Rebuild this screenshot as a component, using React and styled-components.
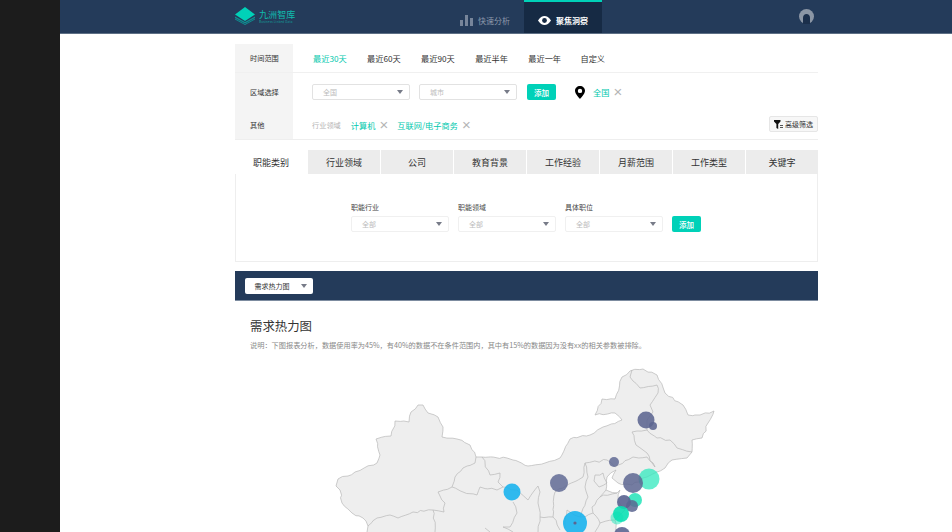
import React from 'react';
import styled, { createGlobalStyle } from 'styled-components';

const GlobalStyle = createGlobalStyle`
  html, body {
    margin: 0;
    height: 532px;
    overflow: hidden;
    background: #fff;
  }
  body, button {
    font-family: "Noto Sans CJK SC", "Liberation Sans", sans-serif;
  }
`;

const Page = styled.div`
  display: flex;
  width: 952px;
  height: 532px;
  overflow: hidden;
`;

const SideBar = styled.div`
  flex: 0 0 60px;
  background: #1c1c1c;
`;

const Main = styled.div`
  flex: 1;
  min-width: 0;
`;

const Header = styled.header`
  height: 33px;
  background: #243b5a;
  border-bottom: 1px solid #5d6f85;
  padding-left: 175px;
`;

const HeaderInner = styled.div`
  width: 583px;
  height: 33px;
  display: flex;
  align-items: center;
`;

const Logo = styled.div`
  display: flex;
  align-items: center;
  gap: 4px;
  width: 211px;
  margin-top: -1px;
`;

const LogoText = styled.div`
  color: #10bcae;
  font-size: 9px;
  line-height: 11px;
  letter-spacing: 0.1px;

  small {
    display: block;
    margin-top: 1px;
    font-size: 3px;
    line-height: 3px;
    letter-spacing: 0.2px;
    white-space: nowrap;
    opacity: 0.75;
  }
`;

const NavTab = styled.div`
  box-sizing: border-box;
  height: 33px;
  width: ${props => props.$width}px;
  display: flex;
  align-items: center;
  justify-content: center;
  gap: 5px;
  padding-top: 6px;
  font-size: 8px;
  color: ${props => (props.$active ? '#fff' : '#8d9aab')};
  background: ${props => (props.$active ? '#162a44' : 'transparent')};
  border-top: 2px solid ${props => (props.$active ? '#00d1b8' : 'transparent')};
  font-weight: ${props => (props.$active ? 700 : 400)};
`;

const Avatar = styled.svg`
  margin-left: 197px;
  margin-top: -1px;
`;

const Content = styled.div`
  width: 583px;
  margin-left: 175px;
  padding-top: 10px;
`;

const FilterPanel = styled.div`
  border-bottom: 1px solid #eee;
`;

const FilterRow = styled.div`
  display: flex;
  box-sizing: border-box;
  height: ${props => props.$height}px;
  border-bottom: ${props => (props.$line ? '1px solid #f0f0f0' : 'none')};
`;

const RowLabel = styled.div`
  flex: 0 0 58px;
  background: #f4f4f4;
  display: flex;
  align-items: center;
  padding-left: 15px;
  box-sizing: border-box;
  font-size: 7.2px;
  color: #333;
`;

const RowBody = styled.div`
  flex: 1;
  display: flex;
  align-items: center;
  padding-left: 19px;
`;

const TimeLink = styled.span`
  font-size: 8.2px;
  margin-right: 20.4px;
  color: ${props => (props.$active ? '#00c9ae' : '#333')};

  &:first-child {
    margin-left: 1px;
  }

  &:last-child {
    margin-left: -1px;
  }
`;

const SelectBox = styled.div`
  box-sizing: border-box;
  width: 98px;
  height: 16px;
  border: 1px solid ${props => (props.$soft ? '#f0f0f0' : '#e2e2e2')};
  border-radius: 2px;
  background: #fff;
  display: flex;
  align-items: center;
  justify-content: space-between;
  padding: 0 6px 0 10px;
  font-size: 7px;
  color: #bbb;
  flex: none;
`;

const Caret = styled.i`
  width: 0;
  height: 0;
  border-left: 3px solid transparent;
  border-right: 3px solid transparent;
  border-top: 4px solid #777b88;
`;

const AddButton = styled.button`
  width: 29px;
  height: 16px;
  padding: 0;
  border: 0;
  border-radius: 2px;
  background: #00d1b8;
  color: #fff;
  font-size: 7.5px;
  font-weight: 500;
  flex: none;
`;

const SelectGap = styled.div`
  flex: 0 0 ${props => props.$size}px;
`;

const Region = styled.div`
  display: flex;
  align-items: center;
  gap: 8px;
  margin-left: 19px;
`;

const TagText = styled.span`
  color: #00c9ae;
  font-size: 8.2px;
  white-space: nowrap;
`;

const Close = styled.span`
  flex: 0 0 9px;
  display: flex;
  align-items: center;
  justify-content: center;
  height: 10px;
  margin: 0 ${props => props.$right ?? 9}px 0 ${props => props.$left ?? 4}px;
  color: #b5b5b5;
  font-size: 15px;
  line-height: 10px;
  font-family: "Liberation Sans", sans-serif;
`;

const FieldName = styled.span`
  color: #b4b4b4;
  font-size: 7.2px;
  margin-right: 10px;
  white-space: nowrap;
`;

const AdvancedButton = styled.button`
  margin-left: auto;
  margin-top: -2px;
  width: 49px;
  height: 16px;
  padding: 0;
  background: #f7f7f7;
  border: 1px solid #e6e6e6;
  border-radius: 2px;
  display: flex;
  align-items: center;
  justify-content: center;
  gap: 2px;
  font-size: 7px;
  color: #333;
`;

const TabPanel = styled.div`
  margin-top: 10px;
  height: 112px;
  border: 1px solid #eee;
  border-top: 0;
  box-sizing: border-box;
`;

const TabRow = styled.div`
  display: flex;
  height: 24px;
  margin: 0 -1px;
  gap: 1px;
`;

const Tab = styled.div`
  flex: 1;
  display: flex;
  align-items: center;
  justify-content: center;
  font-size: 9px;
  color: #333;
  background: ${props => (props.$active ? '#fff' : '#ececec')};
`;

const SelectorRow = styled.div`
  display: flex;
  align-items: flex-end;
  gap: 9px;
  margin-top: 28px;
  padding-left: 115px;
`;

const Field = styled.div`
  display: flex;
  flex-direction: column;
  gap: 4px;
`;

const FieldLabel = styled.label`
  font-size: 7px;
  line-height: 10px;
  color: #444;
`;

const ChartBar = styled.div`
  margin-top: 9px;
  height: 30px;
  box-sizing: border-box;
  padding-left: 10px;
  background: #243b5a;
  border-bottom: 1px solid #7d8ca0;
  display: flex;
  align-items: center;
`;

const ChartSelect = styled.div`
  box-sizing: border-box;
  width: 68px;
  height: 16px;
  margin-top: 1px;
  border-radius: 2px;
  background: #fff;
  display: flex;
  align-items: center;
  justify-content: space-between;
  padding: 0 6px 0 9.500px;
  font-size: 7px;
  color: #333;
`;

const ChartSection = styled.section`
  padding: 17px 0 0;
`;

const ChartTitle = styled.h2`
  margin: 0 0 0 15px;
  font-size: 12.4px;
  line-height: 16px;
  font-weight: 400;
  color: #333;
`;

const ChartNote = styled.p`
  margin: 6px 0 0 15px;
  font-size: 7.2px;
  line-height: 10px;
  color: #888;
  white-space: nowrap;
`;

const MapSvg = styled.svg`
  display: block;
  margin-top: 10px;
`;

const OUTLINE =
  'M336 486 338 479 348 476 355 472 377 463 380 455 376 439 391 436 395 421 409 422 411 412 418 405 423 405 428 413 438 417 443 427 442 437 457 439 470 445 476 457 482 457 507 458 513 460 528 466 545 463 560 458 570 439 590 435 603 427 622 420 615 413 595 415 602 399 615 399 622 377 630 371 643 369 657 375 665 393 683 405 688 415 700 415 714 411 708 423 702 438 692 440 692 452 687 458 672 460 665 468 657 472 647 477 632 485 618 483 612 478 616 470 607 477 606 490 617 493 620 490 618 500 625 510 615 520 617 533 626 560 360 560 367 532 368 526 363 518 352 513 342 503 340 490Z';

const BORDERS = [
  'M368 526 377 518 390 515 398 518 413 512 433 510 444 512 445 503 438 492 452 487 463 492 477 495 480 487 497 490 503 487',
  'M433 510 435 532',
  'M452 487 455 477 463 468 475 463 476 457',
  'M482 457 490 475 500 473 498 482 503 487 517 490 528 500 538 486 540 492 538 503 540 517 553 517 555 492 567 485 583 477 585 463 607 460 615 467 633 457 647 457 655 467',
  'M513 502 517 513 510 527 503 527 513 532',
  'M485 528 490 532',
  'M632 370 630 377 640 388 657 385 658 393 650 405 653 412 647 420 647 430 657 438 670 440 677 448 692 452',
  'M632 432 637 431 647 430',
  'M632 432 636 445 643 450 647 453 655 467',
  'M585 463 588 477 585 487 588 497 580 517 593 513 600 523 595 532',
  'M617 493 600 497 592 507 593 513',
  'M595 475 603 473 607 483 599 487 594 481Z',
  'M580 517 567 510 565 528',
  'M600 523 615 520',
  'M540 517 538 532',
  'M553 517 560 530',
  'M606 490 600 497',
];

const BUBBLES = [
  { x: 559, y: 483, r: 9, fill: 'rgba(92,101,145,0.82)' },
  { x: 512, y: 492, r: 8.5, fill: 'rgba(20,178,238,0.88)' },
  { x: 575, y: 523, r: 12, fill: 'rgba(20,178,238,0.88)' },
  { x: 575, y: 523, r: 1.6, fill: '#5c6591' },
  { x: 614, y: 462, r: 5, fill: 'rgba(92,101,145,0.82)' },
  { x: 646, y: 420, r: 8.5, fill: 'rgba(92,101,145,0.88)' },
  { x: 653, y: 426, r: 4, fill: 'rgba(92,101,145,0.88)' },
  { x: 649, y: 479, r: 10.5, fill: 'rgba(50,232,190,0.75)' },
  { x: 633, y: 483, r: 10, fill: 'rgba(92,101,145,0.85)' },
  { x: 635, y: 500, r: 7, fill: 'rgba(20,226,180,0.8)' },
  { x: 624, y: 502, r: 7, fill: 'rgba(92,101,145,0.92)' },
  { x: 632, y: 506, r: 6, fill: 'rgba(92,101,145,0.85)' },
  { x: 617, y: 518, r: 6.5, fill: 'rgba(50,232,190,0.55)' },
  { x: 621, y: 514, r: 8, fill: 'rgba(10,224,180,0.9)' },
  { x: 622, y: 535, r: 8, fill: 'rgba(92,101,145,0.9)' },
];

// the province lines wander in the reference, so break long segments up a little
const roughen = d => {
  let seed = d.length;
  const wobble = () => {
    seed = (seed * 9301 + 49297) % 233280;
    return (seed / 233280 - 0.5) * 2.2;
  };
  const nums = d.match(/-?\d+(\.\d+)?/g).map(Number);
  const out = [];
  for (let i = 0; i < nums.length; i += 2) {
    const [x, y] = [nums[i], nums[i + 1]];
    if (i > 0) {
      const [px, py] = [nums[i - 2], nums[i - 1]];
      const steps = Math.floor(Math.hypot(x - px, y - py) / 4);
      for (let s = 1; s < steps; s++) {
        out.push(`${(px + ((x - px) * s) / steps + wobble()).toFixed(1)} ${(py + ((y - py) * s) / steps + wobble()).toFixed(1)}`);
      }
    }
    out.push(`${x} ${y}`);
  }
  return `M${out.join(' ')}${d.endsWith('Z') ? 'Z' : ''}`;
};

const ChinaMap = () => (
  <MapSvg width="583" height="172" viewBox="235 360 583 172">
    <path d={roughen(OUTLINE)} fill="#eeeeee" stroke="#b8b8b8" strokeWidth="0.7" strokeLinejoin="round" />
    {BORDERS.map(d => (
      <path key={d} d={roughen(d)} fill="none" stroke="#b8b8b8" strokeWidth="0.7" strokeLinejoin="round" />
    ))}
    {BUBBLES.map(b => (
      <circle key={`${b.x}-${b.y}-${b.r}`} cx={b.x} cy={b.y} r={b.r} fill={b.fill} />
    ))}
  </MapSvg>
);

const LogoMark = () => (
  <svg width="20" height="18" viewBox="0 0 20 18">
    <path d="M0 9.5 10 15 20 9.5 20 11 10 16.500 0 11Z" fill="#0f8f92" />
    <path d="M0 11.500 10 17 20 11.500 20 12.500 10 18 0 12.500Z" fill="#0f8f92" />
    <path d="M10 0 20 7.500 10 14 0 7.500Z" fill="#00d1b8" />
  </svg>
);

const BarsIcon = () => (
  <svg width="13" height="11" viewBox="0 0 13 11">
    <rect x="0" y="5" width="3" height="6" fill="#77859a" />
    <rect x="5" y="0" width="3" height="11" fill="#77859a" />
    <rect x="10" y="3" width="3" height="8" fill="#77859a" />
  </svg>
);

const EyeIcon = () => (
  <svg width="13" height="9" viewBox="0 0 13 9">
    <path d="M0 4.500C2 1.300 4.200 0 6.500 0S11 1.300 13 4.500C11 7.700 8.800 9 6.500 9S2 7.700 0 4.500Z" fill="#fff" />
    <circle cx="6.500" cy="4.500" r="2.400" fill="#162a44" />
  </svg>
);

const AvatarIcon = () => (
  <Avatar width="15" height="15" viewBox="0 0 15 15">
    <circle cx="7.500" cy="7.500" r="7.500" fill="#8b96a5" />
    <path d="M4 15V9C4 6.500 5.500 5 7.500 5S11 6.500 11 9V15Z" fill="#1b2f4b" />
  </Avatar>
);

const PinIcon = () => (
  <svg width="10" height="13" viewBox="0 0 10 13">
    <path
      fillRule="evenodd"
      d="M5 0C2.200 0 0 2.100 0 4.800 0 8 5 13 5 13S10 8 10 4.800C10 2.100 7.800 0 5 0ZM5 2.700A2.200 2.200 0 1 1 5 7.100 2.200 2.200 0 0 1 5 2.700Z"
      fill="#000"
    />
  </svg>
);

const FunnelIcon = () => (
  <svg width="9" height="9" viewBox="0 0 9 9">
    <path d="M0 0H6.500V1.500L4.200 4V9L2.400 8V4L0 1.500Z" fill="#111" />
    <rect x="6" y="5" width="3" height="1" fill="#555" />
    <rect x="6" y="7" width="3" height="1" fill="#555" />
  </svg>
);

const Select = ({ text, soft }) => (
  <SelectBox $soft={soft}>
    {text}
    <Caret />
  </SelectBox>
);

const TIME_RANGES = ['最近30天', '最近60天', '最近90天', '最近半年', '最近一年', '自定义'];
const TABS = ['职能类别', '行业领域', '公司', '教育背景', '工作经验', '月薪范围', '工作类型', '关键字'];
const FIELDS = ['职能行业', '职能领域', '具体职位'];

const App = () => (
  <Page>
    <GlobalStyle />
    <SideBar />
    <Main>
      <Header>
        <HeaderInner>
          <Logo>
            <LogoMark />
            <LogoText>
              九洲智库
              <small>Business Linked Data</small>
            </LogoText>
          </Logo>
          <NavTab $width={78}>
            <BarsIcon />
            快速分析
          </NavTab>
          <NavTab $width={78} $active>
            <EyeIcon />
            聚焦洞察
          </NavTab>
          <AvatarIcon />
        </HeaderInner>
      </Header>
      <Content>
        <FilterPanel>
          <FilterRow $height={29} $line>
            <RowLabel>时间范围</RowLabel>
            <RowBody>
              {TIME_RANGES.map((item, i) => (
                <TimeLink key={item} $active={i === 0}>
                  {item}
                </TimeLink>
              ))}
            </RowBody>
          </FilterRow>
          <FilterRow $height={38}>
            <RowLabel>区域选择</RowLabel>
            <RowBody>
              <Select text="全国" />
              <SelectGap $size={9} />
              <Select text="城市" />
              <SelectGap $size={10} />
              <AddButton>添加</AddButton>
              <Region>
                <PinIcon />
                <TagText>全国</TagText>
                <Close $left={-4} $right={0}>×</Close>
              </Region>
            </RowBody>
          </FilterRow>
          <FilterRow $height={28}>
            <RowLabel>其他</RowLabel>
            <RowBody>
              <FieldName>行业领域</FieldName>
              <TagText>计算机</TagText>
              <Close>×</Close>
              <TagText>互联网/电子商务</TagText>
              <Close>×</Close>
              <AdvancedButton>
                <FunnelIcon />
                高级筛选
              </AdvancedButton>
            </RowBody>
          </FilterRow>
        </FilterPanel>
        <TabPanel>
          <TabRow>
            {TABS.map((tab, i) => (
              <Tab key={tab} $active={i === 0}>
                {tab}
              </Tab>
            ))}
          </TabRow>
          <SelectorRow>
            {FIELDS.map(name => (
              <Field key={name}>
                <FieldLabel>{name}</FieldLabel>
                <Select text="全部" soft />
              </Field>
            ))}
            <AddButton>添加</AddButton>
          </SelectorRow>
        </TabPanel>
        <ChartBar>
          <ChartSelect>
            需求热力图
            <Caret />
          </ChartSelect>
        </ChartBar>
        <ChartSection>
          <ChartTitle>需求热力图</ChartTitle>
          <ChartNote>说明：下图报表分析，数据使用率为45%，有40%的数据不在条件范围内，其中有15%的数据因为没有xx的相关参数被排除。</ChartNote>
          <ChinaMap />
        </ChartSection>
      </Content>
    </Main>
  </Page>
);

export default App;
